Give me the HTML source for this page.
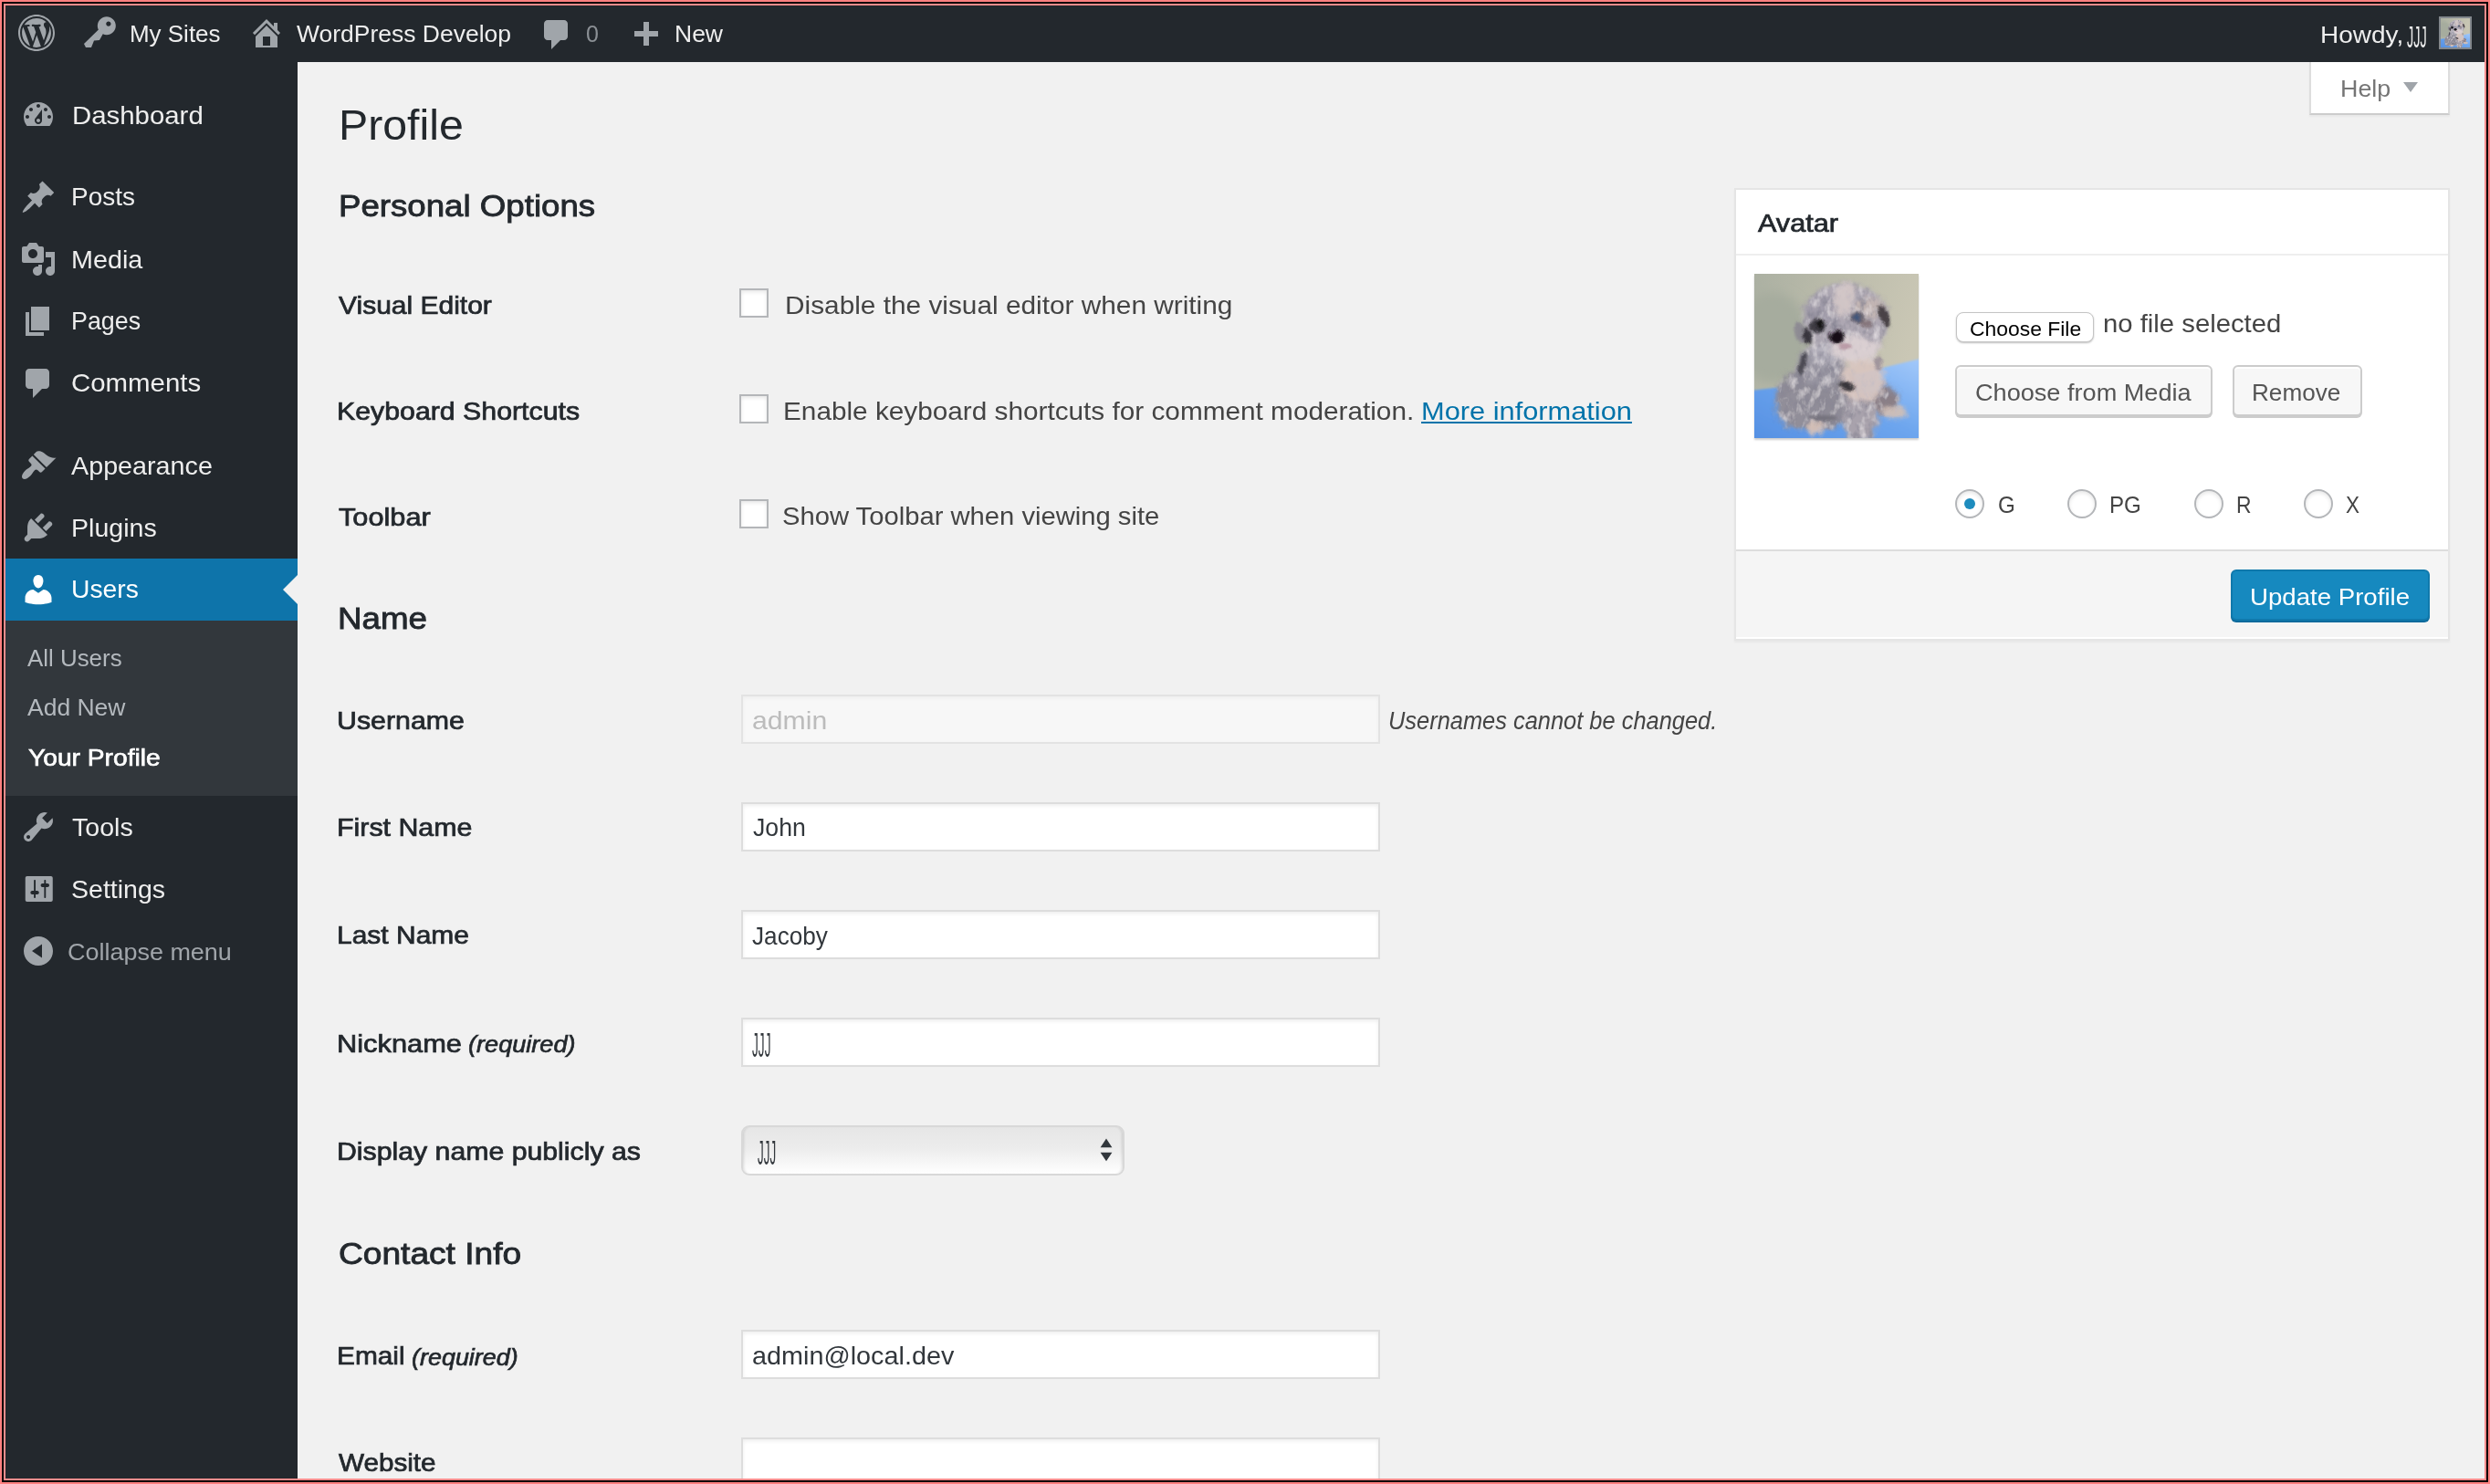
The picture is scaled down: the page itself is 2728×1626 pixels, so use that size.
<!DOCTYPE html>
<html lang="en"><head><meta charset="utf-8"><title>Profile ‹ WordPress Develop — WordPress</title>
<style>
html,body{margin:0;padding:0}
body{width:2728px;height:1626px;overflow:hidden;background:#ff8080;position:relative;font-family:"Liberation Sans",sans-serif}
.a{position:absolute;display:block;box-sizing:border-box}
.t{position:absolute;white-space:nowrap;transform-origin:0 0;display:block}
#f1{left:2px;top:2px;width:2724px;height:1622px;background:#000}
#f2{left:4px;top:4px;width:2720px;height:1618px;background:#ff8c8c}
#c{left:6px;top:6px;width:2716px;height:1614px;background:#f1f1f1;overflow:hidden}
#p{left:-6px;top:-6px;width:2728px;height:1626px}
#bar{left:6px;top:6px;width:2716px;height:62px;background:#23282d}
#side{left:6px;top:68px;width:320px;height:1552px;background:#23282d}
#cur{left:6px;top:612px;width:320px;height:68px;background:#0e74aa}
#notch{left:310px;top:630px;width:0;height:0;border:16px solid transparent;border-right-color:#f1f1f1;border-left-width:0}
#sub{left:6px;top:680px;width:320px;height:192px;background:#32373c}
#help{left:2530px;top:68px;width:154px;height:58px;background:#fff;border:2px solid #ddd;border-bottom-color:#ccc;border-top:0;box-shadow:0 2px 2px rgba(0,0,0,.04)}
#tri{left:2633px;top:90px;width:0;height:0;border-left:8px solid transparent;border-right:8px solid transparent;border-top:11px solid #a0a5aa}
.cb{width:32px;height:32px;background:#fff;border:2px solid #b4b6b9;box-shadow:inset 0 2px 4px rgba(0,0,0,.1)}
.in{left:812px;width:700px;height:54px;background:#fff;border:2px solid #ddd;box-shadow:inset 0 2px 4px rgba(0,0,0,.07)}
.in.dis{background:#f7f7f7;border-color:#e3e3e3;box-shadow:inset 0 2px 4px rgba(0,0,0,.04)}
#sel{left:812px;top:1233px;width:420px;height:55px;border:2px solid #d8d8d8;border-radius:9px;background:linear-gradient(#e6e6e6,#ececec 45%,#fcfcfc 92%,#fff);box-shadow:inset 3px 0 3px -2px rgba(0,0,0,.12),inset -3px 0 3px -2px rgba(0,0,0,.12)}
#mb{left:1900px;top:206px;width:784px;height:496px;background:#fff;border:2px solid #e5e5e5;box-shadow:0 2px 2px rgba(0,0,0,.04)}
#mbh{left:1902px;top:278px;width:780px;height:2px;background:#eee}
#mbf{left:1902px;top:602px;width:780px;height:96px;background:#f5f5f5;border-top:2px solid #ddd}
.btn{height:56px;background:#f7f7f7;border:2px solid #ccc;border-radius:6px;box-shadow:0 2px 0 #ccc,inset 0 2px 0 #fff}
#upd{left:2444px;top:624px;width:218px;height:56px;background:#1689bf;border:2px solid #1079ac;border-radius:6px;box-shadow:0 2px 0 #0b6a9c}
#cf{left:2143px;top:342px;width:151px;height:33px;background:#fff;border:1px solid #c4c4c4;border-radius:8px;box-shadow:0 1px 2px rgba(0,0,0,.25)}
.rd{width:32px;height:32px;border-radius:50%;background:#fff;border:2px solid #b4b6b9;box-shadow:inset 0 2px 4px rgba(0,0,0,.1)}
#dot{left:2152px;top:546px;width:12px;height:12px;border-radius:50%;background:#1e8cbe}
#av{left:2672px;top:18px;width:36px;height:36px;border:2px solid #82878c;background:#eee;overflow:hidden}
</style></head>
<body>
<svg width="0" height="0" style="position:absolute">
<defs>
<filter id="b2" x="-30%" y="-30%" width="160%" height="160%"><feGaussianBlur stdDeviation="2.4" result="b"/><feTurbulence type="fractalNoise" baseFrequency="0.09" numOctaves="2" seed="3" result="n"/><feDisplacementMap in="b" in2="n" scale="9" xChannelSelector="R" yChannelSelector="G" result="d"/><feTurbulence type="fractalNoise" baseFrequency="0.13 0.08" numOctaves="3" seed="11" result="n2"/><feColorMatrix in="n2" type="matrix" values="0 0 0 0 .25  0 0 0 0 .24  0 0 0 0 .3  2.2 0 0 0 -1.0" result="sp"/><feComposite in="sp" in2="d" operator="in" result="spi"/><feColorMatrix in="n2" type="matrix" values="0 0 0 0 .88  0 0 0 0 .84  0 0 0 0 .86  0 1.45 0 0 -.7" result="lp"/><feComposite in="lp" in2="d" operator="in" result="lpi"/><feMerge result="m"><feMergeNode in="d"/><feMergeNode in="spi"/><feMergeNode in="lpi"/></feMerge><feGaussianBlur in="m" stdDeviation=".7"/></filter>
<filter id="b4" x="-30%" y="-30%" width="160%" height="160%"><feGaussianBlur stdDeviation="2.6" result="b"/><feTurbulence type="fractalNoise" baseFrequency="0.09" numOctaves="2" seed="5" result="n"/><feDisplacementMap in="b" in2="n" scale="9" xChannelSelector="R" yChannelSelector="G" result="d"/><feTurbulence type="fractalNoise" baseFrequency="0.13 0.08" numOctaves="3" seed="21" result="n2"/><feColorMatrix in="n2" type="matrix" values="0 0 0 0 .55  0 0 0 0 .5  0 0 0 0 .55  2 0 0 0 -1.05" result="sp"/><feComposite in="sp" in2="d" operator="in" result="spi"/><feMerge><feMergeNode in="d"/><feMergeNode in="spi"/></feMerge></filter>
<filter id="b1" x="-30%" y="-30%" width="160%" height="160%"><feGaussianBlur stdDeviation="1.5" result="b"/><feTurbulence type="fractalNoise" baseFrequency="0.12" numOctaves="2" seed="7" result="n"/><feDisplacementMap in="b" in2="n" scale="5" xChannelSelector="R" yChannelSelector="G"/></filter>
<filter id="b0" x="-30%" y="-30%" width="160%" height="160%"><feGaussianBlur stdDeviation="1.3"/></filter>
<filter id="b3" x="-10%" y="-10%" width="120%" height="120%"><feGaussianBlur stdDeviation="6"/></filter>
<linearGradient id="bg" x1="0" y1="0" x2="1" y2="0.3"><stop offset="0" stop-color="#abb0a2"/><stop offset=".5" stop-color="#bcbcab"/><stop offset="1" stop-color="#cac7b5"/></linearGradient>
<linearGradient id="bl" x1="0" y1="1" x2="1" y2="0"><stop offset="0" stop-color="#548fe2"/><stop offset=".55" stop-color="#6ea6ee"/><stop offset="1" stop-color="#a3c9fa"/></linearGradient>
<symbol id="pup" viewBox="0 0 180 180">
<rect width="180" height="180" fill="url(#bg)"/>
<ellipse cx="20" cy="70" rx="40" ry="50" fill="#a6ac9e" filter="url(#b3)"/>
<path d="M-5 128 L30 124 L120 108 L182 93 L182 185 L-5 185z" fill="url(#bl)" filter="url(#b0)"/>
<g filter="url(#b2)">
<ellipse cx="70" cy="135" rx="46" ry="36" fill="#8e8b96"/>
<ellipse cx="48" cy="150" rx="24" ry="20" fill="#918e99"/>
<ellipse cx="74" cy="100" rx="26" ry="24" fill="#9a97a3"/>
<ellipse cx="143" cy="138" rx="15" ry="16" fill="#8a7f86"/>
<ellipse cx="116" cy="158" rx="19" ry="28" fill="#a8a2ac"/>
<ellipse cx="100" cy="52" rx="47" ry="42" fill="#ada7b2"/>
<ellipse cx="75" cy="40" rx="20" ry="18" fill="#a29daa"/>
<ellipse cx="125" cy="38" rx="16" ry="12" fill="#c2b5b3"/>
<ellipse cx="78" cy="88" rx="14" ry="12" fill="#b4b1bc"/>
</g>
<g filter="url(#b4)" opacity=".92">
<ellipse cx="119" cy="116" rx="24" ry="25" fill="#d9c6c0"/>
<ellipse cx="98" cy="28" rx="11" ry="19" fill="#d4c8c8" transform="rotate(12 98 28)"/>
<ellipse cx="110" cy="82" rx="27" ry="15" fill="#ddd2d4"/>
<ellipse cx="153" cy="152" rx="15" ry="7.5" fill="#d2c0b6"/>
<ellipse cx="68" cy="169" rx="10" ry="7" fill="#d8c2b8"/>
</g>
<g filter="url(#b1)">
<ellipse cx="50" cy="64" rx="5" ry="12" fill="#8d8a93" transform="rotate(-12 50 64)"/>
<ellipse cx="58" cy="68" rx="4.5" ry="10" fill="#38363e" transform="rotate(-15 58 68)"/>
<ellipse cx="69" cy="57" rx="8.5" ry="8.5" fill="#3f3d45"/>
<ellipse cx="72" cy="56" rx="4.5" ry="5.5" fill="#121217"/>
<ellipse cx="142" cy="46" rx="5" ry="13" fill="#4a4246" transform="rotate(-20 142 46)"/>
<ellipse cx="113" cy="48" rx="8" ry="6" fill="#6a6570"/>
<ellipse cx="112" cy="48" rx="4" ry="3.5" fill="#3f567c"/>
<ellipse cx="122" cy="55" rx="8" ry="3.5" fill="#85767c" transform="rotate(15 122 55)"/>
<ellipse cx="90.5" cy="69.5" rx="8.5" ry="7.5" fill="#121117"/>
<ellipse cx="99" cy="80" rx="7" ry="3" fill="#b99aa5"/>
<ellipse cx="101" cy="123" rx="9" ry="4" fill="#38353b" transform="rotate(18 101 123)"/>
<ellipse cx="53" cy="98" rx="3.5" ry="14" fill="#4b4952" transform="rotate(14 53 98)"/>
<ellipse cx="75" cy="158" rx="16" ry="3" fill="#74727d"/>
<ellipse cx="136" cy="98" rx="4" ry="8" fill="#a0959c"/>
</g>
</symbol>
</defs>
</svg>
<div class="a" id="f1"></div><div class="a" id="f2"></div>
<div class="a" id="c"><div class="a" id="p">
<div class="a" id="bar"></div>
<div class="a" id="side"></div>
<div class="a" id="cur"></div><div class="a" id="notch"></div>
<div class="a" id="sub"></div>
<div class="a" id="help"></div><div class="a" id="tri"></div>
<div class="a" id="av"><svg width="32" height="32" style="display:block"><use href="#pup" width="32" height="32"/></svg></div>
<svg class="a" style="left:20px;top:16px" width="40" height="40" viewBox="0 0 20 20"><path fill="#a0a5aa" fill-rule="evenodd" d="M20 10c0-5.52-4.48-10-10-10S0 4.48 0 10s4.48 10 10 10 10-4.48 10-10zM10 1.01c4.97 0 8.99 4.02 8.99 8.99s-4.02 8.99-8.99 8.99S1.01 14.97 1.01 10 5.03 1.01 10 1.01zM8.01 14.82L4.96 6.61c.49-.03 1.05-.08 1.05-.08.43-.05.38-1.01-.06-.99 0 0-1.29.1-2.13.1-.15 0-.33 0-.52-.01 1.44-2.17 3.9-3.6 6.7-3.6 2.09 0 3.99.79 5.41 2.09-.6-.08-1.45.35-1.45 1.42 0 .66.38 1.22.79 1.88.31.54.5 1.22.5 2.21 0 1.34-1.27 4.48-1.27 4.48l-2.71-7.5c.48-.03.75-.16.75-.16.43-.05.38-1.1-.05-1.08 0 0-1.3.11-2.14.11-.78 0-2.11-.11-2.11-.11-.43-.02-.48 1.06-.05 1.08l.84.08 1.12 3.04zm6.02 2.15L16.64 10s.67-1.69.39-3.81c.63 1.14.94 2.42.94 3.81 0 2.96-1.56 5.58-3.94 6.97zM2.68 6.77L6.5 17.25c-2.67-1.3-4.47-4.08-4.47-7.25 0-1.16.2-2.23.65-3.23zm7.45 4.53l2.29 6.25c-.75.27-1.57.42-2.42.42-.72 0-1.41-.11-2.06-.3z"/></svg>
<svg class="a" style="left:90px;top:16px" width="40" height="40" viewBox="0 0 20 20"><path fill="#a0a5aa" fill-rule="evenodd" d="M16.95 2.58c1.96 1.95 1.96 5.12 0 7.07-1.51 1.51-3.75 1.84-5.59 1.01l-1.87 3.31-2.99.31L5 18H2l-1-2 7.95-7.69c-.92-1.87-.62-4.18.93-5.73 1.95-1.96 5.12-1.96 7.07 0zm-2.51 3.79c.74 0 1.33-.6 1.33-1.34 0-.73-.59-1.33-1.33-1.33-.73 0-1.33.6-1.33 1.33 0 .74.6 1.34 1.33 1.34z"/></svg>
<svg class="a" style="left:272px;top:16px" width="40" height="40" viewBox="0 0 20 20"><path fill="#a0a5aa" fill-rule="evenodd" d="M16 8.5l1.53 1.53-1.06 1.06L10 4.62l-6.47 6.47-1.06-1.06L10 2.5l4 4v-2h2v4zm-6-2.46l6 5.99V18H4v-5.97zM12 17v-5H8v5h4z"/></svg>
<svg class="a" style="left:687px;top:20px" width="40" height="40" viewBox="0 0 20 20"><path fill="#a0a5aa" fill-rule="evenodd" d="M17 7v3h-5v5H9v-5H4V7h5V2h3v5h5z"/></svg>
<svg class="a" style="left:590px;top:18px" width="40" height="40" viewBox="0 0 20 20"><path fill="#a0a5aa" fill-rule="evenodd" d="M5 2h9c1.1 0 2 .9 2 2v7c0 1.1-.9 2-2 2h-2l-5 5v-5H5c-1.1 0-2-.9-2-2V4c0-1.1.9-2 2-2z"/></svg>
<svg class="a" style="left:22px;top:106px" width="40" height="40" viewBox="0 0 20 20"><path fill="#a0a5aa" fill-rule="evenodd" d="M3.76 16h12.48c1.1-1.37 1.76-3.11 1.76-5 0-4.42-3.58-8-8-8s-8 3.58-8 8c0 1.89.66 3.63 1.76 5zM10 4c.55 0 1 .45 1 1s-.45 1-1 1-1-.45-1-1 .45-1 1-1zM6 6c.55 0 1 .45 1 1s-.45 1-1 1-1-.45-1-1 .45-1 1-1zm8 0c.55 0 1 .45 1 1s-.45 1-1 1-1-.45-1-1 .45-1 1-1zm-5.37 5.55L12 7v6c0 1.1-.9 2-2 2s-2-.9-2-2c0-.57.24-1.08.63-1.45zM4 10c.55 0 1 .45 1 1s-.45 1-1 1-1-.45-1-1 .45-1 1-1zm12 0c.55 0 1 .45 1 1s-.45 1-1 1-1-.45-1-1 .45-1 1-1zm-5 3c0-.55-.45-1-1-1s-1 .45-1 1 .45 1 1 1 1-.45 1-1z"/></svg>
<svg class="a" style="left:22px;top:196px" width="40" height="40" viewBox="0 0 20 20"><path fill="#a0a5aa" fill-rule="evenodd" d="M10.44 3.02l1.82-1.82 6.36 6.35-1.83 1.82c-1.05-.68-2.48-.57-3.41.36l-.75.75c-.92.93-1.04 2.35-.35 3.41l-1.83 1.82-2.41-2.41-2.8 2.79c-.42.42-3.38 2.71-3.8 2.29s1.86-3.39 2.28-3.81l2.79-2.79L4.1 9.36l1.83-1.82c1.05.69 2.48.57 3.4-.36l.75-.75c.93-.92 1.05-2.35.36-3.41z"/></svg>
<svg class="a" style="left:22px;top:264px" width="40" height="40" viewBox="0 0 20 20"><path fill="#a0a5aa" fill-rule="evenodd" d="M13 11V4c0-.55-.45-1-1-1h-1.67L9 1H5L3.67 3H2c-.55 0-1 .45-1 1v7c0 .55.45 1 1 1h10c.55 0 1-.45 1-1zM7 4.5c1.38 0 2.5 1.12 2.5 2.5S8.38 9.5 7 9.5 4.5 8.38 4.5 7 5.62 4.5 7 4.5zM14 6h5v10.5c0 1.38-1.12 2.5-2.5 2.5S14 17.88 14 16.5s1.12-2.5 2.5-2.5c.17 0 .34.02.5.05V9h-3V6zm-4 8.05V13h2v3.5c0 1.38-1.12 2.5-2.5 2.5S7 17.88 7 16.5 8.12 14 9.5 14c.17 0 .34.02.5.05z"/></svg>
<svg class="a" style="left:22px;top:332px" width="40" height="40" viewBox="0 0 20 20"><path fill="#a0a5aa" fill-rule="evenodd" d="M6 15V2h10v13H6zm-1 1h8v2H3V5h2v11z"/></svg>
<svg class="a" style="left:22px;top:400px" width="40" height="40" viewBox="0 0 20 20"><path fill="#a0a5aa" fill-rule="evenodd" d="M5 2h9c1.1 0 2 .9 2 2v7c0 1.1-.9 2-2 2h-2l-5 5v-5H5c-1.1 0-2-.9-2-2V4c0-1.1.9-2 2-2z"/></svg>
<svg class="a" style="left:22px;top:490px" width="40" height="40" viewBox="0 0 20 20"><path fill="#a0a5aa" fill-rule="evenodd" d="M14.48 11.06L7.41 3.99l1.5-1.5c.5-.56 2.3-.47 3.51.32 1.21.8 1.43 1.28 2.91 2.1 1.18.64 2.45 1.26 4.45.85zm-.71.71L6.7 4.7 4.93 6.47c-.39.39-.39 1.02 0 1.41l1.06 1.06c.39.39.39 1.03 0 1.42-.6.6-1.43 1.11-2.21 1.69-.35.26-.7.53-1.01.84C1.43 14.23.4 16.08 1.4 17.07c.99 1 2.84-.03 4.18-1.36.31-.31.58-.66.85-1.02.57-.78 1.08-1.61 1.69-2.21.39-.39 1.02-.39 1.41 0l1.06 1.06c.39.39 1.02.39 1.41 0z"/></svg>
<svg class="a" style="left:22px;top:558px" width="40" height="40" viewBox="0 0 20 20"><path fill="#a0a5aa" fill-rule="evenodd" d="M13.11 4.36L9.87 7.6 8 5.73l3.24-3.24c.35-.34 1.05-.2 1.56.32.52.51.66 1.21.31 1.55zm-8 1.77l.91-1.12 9.01 9.01-1.19.84c-.71.71-2.63 1.16-3.82 1.16H6.14L4.9 17.26c-.59.59-1.54.59-2.12 0-.59-.58-.59-1.53 0-2.12l1.24-1.24v-3.88c0-1.13.4-3.19 1.09-3.89zm7.26 3.97l3.24-3.24c.34-.35 1.04-.21 1.55.31.52.51.66 1.21.31 1.55l-3.24 3.25z"/></svg>
<svg class="a" style="left:22px;top:626px" width="40" height="40" viewBox="0 0 20 20"><path fill="#fff" fill-rule="evenodd" d="M10 9.25c-2.27 0-2.73-3.44-2.73-3.44C7 4.02 7.82 2 9.97 2c2.16 0 2.98 2.02 2.71 3.81 0 0-.41 3.44-2.68 3.44zm0 2.57L12.72 10c2.39 0 4.52 2.33 4.52 4.53v2.49s-3.65 1.13-7.24 1.13c-3.65 0-7.24-1.13-7.24-1.13v-2.49c0-2.25 1.94-4.48 4.47-4.48z"/></svg>
<svg class="a" style="left:22px;top:886px" width="40" height="40" viewBox="0 0 20 20"><path fill="#a0a5aa" fill-rule="evenodd" d="M16.68 9.77c-1.34 1.34-3.3 1.67-4.95.99l-5.41 6.52c-.99.99-2.59.99-3.58 0s-.99-2.59 0-3.57l6.52-5.42c-.68-1.65-.35-3.61.99-4.95 1.28-1.28 3.12-1.62 4.72-1.06l-2.89 2.89 2.82 2.82 2.86-2.87c.53 1.58.18 3.39-1.08 4.65zM3.81 16.21c.4.39 1.04.39 1.43 0 .4-.4.4-1.04 0-1.43-.39-.4-1.03-.4-1.43 0-.39.39-.39 1.03 0 1.43z"/></svg>
<svg class="a" style="left:24px;top:954px" width="37.5" height="40" viewBox="0 0 20 20" preserveAspectRatio="none"><path fill="#a0a5aa" fill-rule="evenodd" d="M18 16V4c0-.55-.45-1-1-1H3c-.55 0-1 .45-1 1v12c0 .55.45 1 1 1h14c.55 0 1-.45 1-1zM8 11h1c.55 0 1 .45 1 1s-.45 1-1 1H8v1.5c0 .28-.22.5-.5.5s-.5-.22-.5-.5V13H6c-.55 0-1-.45-1-1s.45-1 1-1h1V5.5c0-.28.22-.5.5-.5s.5.22.5.5V11zm5-2h-1c-.55 0-1-.45-1-1s.45-1 1-1h1V5.5c0-.28.22-.5.5-.5s.5.22.5.5V7h1c.55 0 1 .45 1 1s-.45 1-1 1h-1v5.5c0 .28-.22.5-.5.5s-.5-.22-.5-.5V9z"/></svg>
<svg class="a" style="left:22px;top:1022px" width="40" height="40" viewBox="0 0 20 20"><path fill="#a0a5aa" fill-rule="evenodd" d="M10 2c-4.42 0-8 3.58-8 8s3.58 8 8 8 8-3.58 8-8-3.58-8-8-8zm2 11.75l-5.5-3.75 5.5-3.75v7.5z"/></svg>
<!-- checkboxes -->
<div class="a cb" style="left:810px;top:316px"></div>
<div class="a cb" style="left:810px;top:432px"></div>
<div class="a cb" style="left:810px;top:547px"></div>
<!-- inputs -->
<div class="a in dis" style="top:761px"></div>
<div class="a in" style="top:879px"></div>
<div class="a in" style="top:997px"></div>
<div class="a in" style="top:1115px"></div>
<div class="a" id="sel"></div>
<svg class="a" style="left:1203px;top:1245px" width="18" height="30" viewBox="0 0 18 30"><path fill="#32373c" d="M9 2.4l6.4 9.8H2.6zM9 27.3L2.6 17.8h12.8z"/></svg>
<div class="a in" style="top:1457px"></div>
<div class="a in" style="top:1575px"></div>
<!-- avatar metabox -->
<div class="a" id="mb"></div><div class="a" id="mbh"></div><div class="a" id="mbf"></div>
<svg class="a" style="left:1922px;top:300px;box-shadow:0 2px 2px rgba(0,0,0,.2)" width="180" height="180"><use href="#pup" width="180" height="180"/></svg>
<div class="a" id="cf"></div>
<div class="a btn" style="left:2142px;top:400px;width:282px"></div>
<div class="a btn" style="left:2446px;top:400px;width:142px"></div>
<div class="a rd" style="left:2142px;top:536px"></div><div class="a" id="dot"></div>
<div class="a rd" style="left:2265px;top:536px"></div>
<div class="a rd" style="left:2404px;top:536px"></div>
<div class="a rd" style="left:2524px;top:536px"></div>
<div class="a" id="upd"></div>
<span class="t" style="left:141.7px;top:24.3px;font-size:26px;line-height:26px;color:#eee;transform:scaleX(0.9981);">My Sites</span>
<span class="t" style="left:324.7px;top:24.3px;font-size:26px;line-height:26px;color:#eee;transform:scaleX(1.0184);">WordPress Develop</span>
<span class="t" style="left:642.0px;top:24.3px;font-size:26px;line-height:26px;color:#8b9095;transform:scaleX(0.9615);">0</span>
<span class="t" style="left:738.5px;top:24.3px;font-size:26px;line-height:26px;color:#eee;transform:scaleX(1.0192);">New</span>
<span class="t" style="left:2542.3px;top:24.5px;font-size:26px;line-height:26px;color:#eee;transform:scaleX(1.0764);">Howdy,</span>
<span class="t" style="left:2637.2px;top:23.6px;font-size:33px;line-height:33px;color:#eee;transform:scaleX(0.4375);">JJJ</span>
<span class="t" style="left:2563.9px;top:84.1px;font-size:26px;line-height:26px;color:#757575;transform:scaleX(1.0331);">Help</span>
<span class="t" style="left:78.5px;top:112.5px;font-size:28px;line-height:28px;color:#eee;transform:scaleX(1.0494);">Dashboard</span>
<span class="t" style="left:78.1px;top:202.4px;font-size:28px;line-height:28px;color:#eee;transform:scaleX(0.9981);">Posts</span>
<span class="t" style="left:78.0px;top:270.5px;font-size:28px;line-height:28px;color:#eee;transform:scaleX(1.0269);">Media</span>
<span class="t" style="left:78.2px;top:338.4px;font-size:28px;line-height:28px;color:#eee;transform:scaleX(0.9582);">Pages</span>
<span class="t" style="left:78.2px;top:406.2px;font-size:28px;line-height:28px;color:#eee;transform:scaleX(1.0505);">Comments</span>
<span class="t" style="left:78.2px;top:496.6px;font-size:28px;line-height:28px;color:#eee;transform:scaleX(1.0257);">Appearance</span>
<span class="t" style="left:78.2px;top:564.6px;font-size:28px;line-height:28px;color:#eee;transform:scaleX(1.0199);">Plugins</span>
<span class="t" style="left:78.5px;top:892.5px;font-size:28px;line-height:28px;color:#eee;transform:scaleX(1.0207);">Tools</span>
<span class="t" style="left:78.3px;top:960.8px;font-size:28px;line-height:28px;color:#eee;transform:scaleX(1.0184);">Settings</span>
<span class="t" style="left:77.8px;top:632.4px;font-size:28px;line-height:28px;color:#fff;transform:scaleX(1.0097);">Users</span>
<span class="t" style="left:30.2px;top:708.2px;font-size:26px;line-height:26px;color:#b4b9be;transform:scaleX(0.9960);">All Users</span>
<span class="t" style="left:30.2px;top:762.4px;font-size:26px;line-height:26px;color:#b4b9be;transform:scaleX(1.0187);">Add New</span>
<span class="t" style="left:30.5px;top:816.8px;font-size:26px;line-height:26px;color:#fff;-webkit-text-stroke:0.68px;transform:scaleX(1.0843);">Your Profile</span>
<span class="t" style="left:74.2px;top:1030.3px;font-size:26px;line-height:26px;color:#a0a5aa;transform:scaleX(1.0370);">Collapse menu</span>
<span class="t" style="left:370.9px;top:113.5px;font-size:46px;line-height:46px;color:#23282d;transform:scaleX(1.0493);">Profile</span>
<span class="t" style="left:370.5px;top:207.5px;font-size:34px;line-height:34px;color:#23282d;-webkit-text-stroke:0.88px;transform:scaleX(1.0779);">Personal Options</span>
<span class="t" style="left:369.6px;top:660.2px;font-size:34px;line-height:34px;color:#23282d;-webkit-text-stroke:0.88px;transform:scaleX(1.0810);">Name</span>
<span class="t" style="left:370.5px;top:1356.1px;font-size:34px;line-height:34px;color:#23282d;-webkit-text-stroke:0.88px;transform:scaleX(1.0914);">Contact Info</span>
<span class="t" style="left:370.5px;top:320.9px;font-size:28px;line-height:28px;color:#23282d;-webkit-text-stroke:0.73px;transform:scaleX(1.0713);">Visual Editor</span>
<span class="t" style="left:369.0px;top:436.9px;font-size:28px;line-height:28px;color:#23282d;-webkit-text-stroke:0.73px;transform:scaleX(1.0819);">Keyboard Shortcuts</span>
<span class="t" style="left:370.5px;top:552.8px;font-size:28px;line-height:28px;color:#23282d;-webkit-text-stroke:0.73px;transform:scaleX(1.0972);">Toolbar</span>
<span class="t" style="left:369.0px;top:776.1px;font-size:28px;line-height:28px;color:#23282d;-webkit-text-stroke:0.73px;transform:scaleX(1.0831);">Username</span>
<span class="t" style="left:369.0px;top:893.4px;font-size:28px;line-height:28px;color:#23282d;-webkit-text-stroke:0.73px;transform:scaleX(1.0839);">First Name</span>
<span class="t" style="left:369.1px;top:1011.4px;font-size:28px;line-height:28px;color:#23282d;-webkit-text-stroke:0.73px;transform:scaleX(1.0706);">Last Name</span>
<span class="t" style="left:369.0px;top:1129.7px;font-size:28px;line-height:28px;color:#23282d;-webkit-text-stroke:0.73px;transform:scaleX(1.1000);">Nickname</span>
<span class="t" style="left:513.2px;top:1131.4px;font-size:26px;line-height:26px;color:#23282d;-webkit-text-stroke:0.68px;font-style:italic;transform:scaleX(1.0428);">(required)</span>
<span class="t" style="left:369.0px;top:1247.5px;font-size:28px;line-height:28px;color:#23282d;-webkit-text-stroke:0.73px;transform:scaleX(1.0802);">Display name publicly as</span>
<span class="t" style="left:369.1px;top:1471.8px;font-size:28px;line-height:28px;color:#23282d;-webkit-text-stroke:0.73px;transform:scaleX(1.0660);">Email</span>
<span class="t" style="left:451.4px;top:1473.5px;font-size:26px;line-height:26px;color:#23282d;-webkit-text-stroke:0.68px;font-style:italic;transform:scaleX(1.0356);">(required)</span>
<span class="t" style="left:370.6px;top:1589.4px;font-size:28px;line-height:28px;color:#23282d;-webkit-text-stroke:0.73px;transform:scaleX(1.0593);">Website</span>
<span class="t" style="left:859.6px;top:320.6px;font-size:28px;line-height:28px;color:#444;transform:scaleX(1.0645);">Disable the visual editor when writing</span>
<span class="t" style="left:857.8px;top:436.6px;font-size:28px;line-height:28px;color:#444;transform:scaleX(1.0625);">Enable keyboard shortcuts for comment moderation.</span>
<span class="t" style="left:1556.5px;top:436.6px;font-size:28px;line-height:28px;color:#0073aa;text-decoration:underline;transform:scaleX(1.0992);">More information</span>
<span class="t" style="left:857.0px;top:551.7px;font-size:28px;line-height:28px;color:#444;transform:scaleX(1.0427);">Show Toolbar when viewing site</span>
<span class="t" style="left:823.9px;top:775.8px;font-size:28px;line-height:28px;color:#bcbcbc;transform:scaleX(1.0789);">admin</span>
<span class="t" style="left:824.7px;top:893.4px;font-size:28px;line-height:28px;color:#32373c;transform:scaleX(0.9519);">John</span>
<span class="t" style="left:824.3px;top:1011.7px;font-size:28px;line-height:28px;color:#32373c;transform:scaleX(0.9344);">Jacoby</span>
<span class="t" style="left:824.3px;top:1128.3px;font-size:36px;line-height:36px;color:#32373c;transform:scaleX(0.3788);">JJJ</span>
<span class="t" style="left:830.3px;top:1246.3px;font-size:36px;line-height:36px;color:#32373c;transform:scaleX(0.3731);">JJJ</span>
<span class="t" style="left:823.7px;top:1471.8px;font-size:28px;line-height:28px;color:#32373c;transform:scaleX(1.0285);">admin@local.dev</span>
<span class="t" style="left:1520.7px;top:776.6px;font-size:27px;line-height:27px;color:#444;font-style:italic;transform:scaleX(0.9412);">Usernames cannot be changed.</span>
<span class="t" style="left:1926.4px;top:231.1px;font-size:28px;line-height:28px;color:#23282d;-webkit-text-stroke:0.73px;transform:scaleX(1.0937);">Avatar</span>
<span class="t" style="left:2157.8px;top:349.6px;font-size:22px;line-height:22px;color:#000;transform:scaleX(1.0408);">Choose File</span>
<span class="t" style="left:2304.4px;top:341.1px;font-size:28px;line-height:28px;color:#444;transform:scaleX(1.0455);">no file selected</span>
<span class="t" style="left:2163.9px;top:416.6px;font-size:26px;line-height:26px;color:#555;transform:scaleX(1.0428);">Choose from Media</span>
<span class="t" style="left:2467.4px;top:416.6px;font-size:26px;line-height:26px;color:#555;transform:scaleX(1.0047);">Remove</span>
<span class="t" style="left:2188.9px;top:540.3px;font-size:26px;line-height:26px;color:#444;transform:scaleX(0.9278);">G</span>
<span class="t" style="left:2311.1px;top:540.3px;font-size:26px;line-height:26px;color:#444;transform:scaleX(0.9260);">PG</span>
<span class="t" style="left:2449.8px;top:540.3px;font-size:26px;line-height:26px;color:#444;transform:scaleX(0.8812);">R</span>
<span class="t" style="left:2570.3px;top:540.3px;font-size:26px;line-height:26px;color:#444;transform:scaleX(0.8647);">X</span>
<span class="t" style="left:2464.5px;top:640.5px;font-size:26px;line-height:26px;color:#fff;transform:scaleX(1.0622);">Update Profile</span>
</div></div>
</body></html>
